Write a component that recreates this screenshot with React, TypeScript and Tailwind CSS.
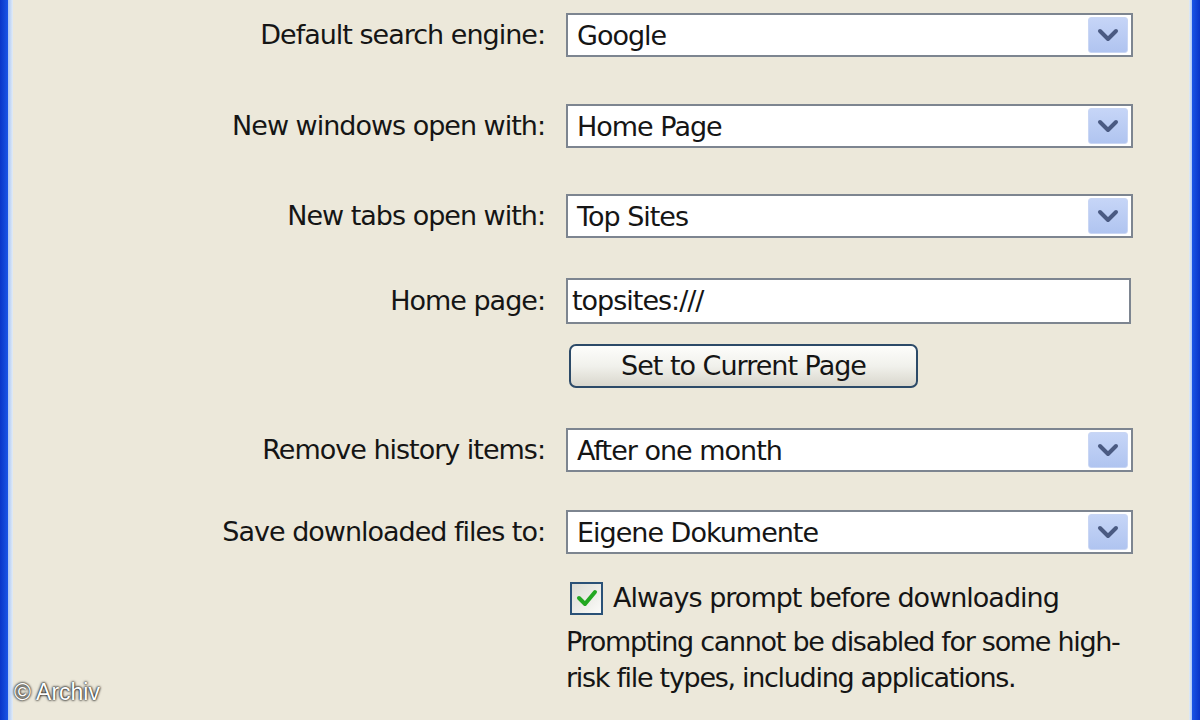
import React from "react";

const font = "font-['DejaVu_Sans',Verdana,sans-serif] text-[27px] tracking-[-1px] text-[#151515]";

function Chevron() {
  return (
    <div className="mr-[3px] flex h-[36px] w-[40px] items-center justify-center rounded-[3px] border border-[#c9d6f4] bg-gradient-to-b from-[#c6d5f7] to-[#b0c4f0]">
      <svg width="22" height="14" viewBox="0 0 22 14">
        <path d="M3 3 L11 11 L19 3" fill="none" stroke="#4a5a82" strokeWidth="4" strokeLinecap="round" strokeLinejoin="round" />
      </svg>
    </div>
  );
}

function Select({ value }: { value: string }) {
  return (
    <div className="flex h-[44px] w-[567px] items-center justify-between border-2 border-[#7d8590] bg-white">
      <span className="pl-[9px] leading-none">{value}</span>
      <Chevron />
    </div>
  );
}

function Row({ label, children, className }: { label: string; children: React.ReactNode; className?: string }) {
  return (
    <div className={"flex items-center " + (className ?? "")}>
      <div className="w-[533px] pr-[1px] text-right">{label}</div>
      <div className="ml-[20px]">{children}</div>
    </div>
  );
}

export default function App() {
  return (
    <div className={"relative flex h-[720px] w-[1200px] overflow-hidden bg-[#ece8da] " + font}>
      <div className="flex h-full w-[13px] shrink-0">
        <div className="h-full w-[8px] bg-gradient-to-r from-[#0a35c8] to-[#1a55e6]" />
        <div className="h-full w-[5px] bg-gradient-to-r from-[#a9c6f6] to-[#e3ecf6]" />
      </div>
      <div className="flex flex-1 flex-col">
        <Row label="Default search engine:" className="mt-[13px]">
          <Select value="Google" />
        </Row>
        <Row label="New windows open with:" className="mt-[47px]">
          <Select value="Home Page" />
        </Row>
        <Row label="New tabs open with:" className="mt-[46px]">
          <Select value="Top Sites" />
        </Row>
        <Row label="Home page:" className="mt-[40px]">
          <div className="flex h-[46px] w-[565px] items-center border-2 border-[#7d8590] bg-white pl-[4px]">
            topsites:///
          </div>
        </Row>
        <div className="mt-[20px] flex pl-[556px]">
          <button className="flex h-[44px] w-[349px] items-center justify-center rounded-[7px] border-2 border-[#2c4a68] bg-gradient-to-b from-[#fdfdfb] via-[#f1f1ec] to-[#d9d7cd] text-[#151515]">
            Set to Current Page
          </button>
        </div>
        <Row label="Remove history items:" className="mt-[40px]">
          <Select value="After one month" />
        </Row>
        <Row label="Save downloaded files to:" className="mt-[38px]">
          <Select value="Eigene Dokumente" />
        </Row>
        <div className="mt-[24px] flex items-center pl-[557px]">
          <div className="flex h-[33px] w-[33px] items-center justify-center border-2 border-[#2a5177] bg-gradient-to-br from-[#dcdcd4] to-[#fbfbf9]">
            <svg width="22" height="20" viewBox="0 0 22 20">
              <path d="M3 10 L9 16 L19 4" fill="none" stroke="#22a822" strokeWidth="4" strokeLinecap="round" strokeLinejoin="round" />
            </svg>
          </div>
          <span className="ml-[10px]">Always prompt before downloading</span>
        </div>
        <div className="mt-[5px] pl-[553px] leading-[36px] tracking-[-1.3px]">
          <div>Prompting cannot be disabled for some high-</div>
          <div>risk file types, including applications.</div>
        </div>
      </div>
      <div className="flex h-full w-[11px] shrink-0">
        <div className="h-full w-[3px] bg-gradient-to-r from-[#e3ecf6] to-[#a9c6f6]" />
        <div className="h-full w-[8px] bg-gradient-to-r from-[#1a55e6] to-[#0a35c8]" />
      </div>
      <div className="absolute bottom-[11px] left-[14px] font-['Liberation_Sans',Arial,sans-serif] text-[23px] tracking-normal text-white [text-shadow:0_0_3px_#000,0_0_2px_#000]">
        © Archiv
      </div>
    </div>
  );
}
